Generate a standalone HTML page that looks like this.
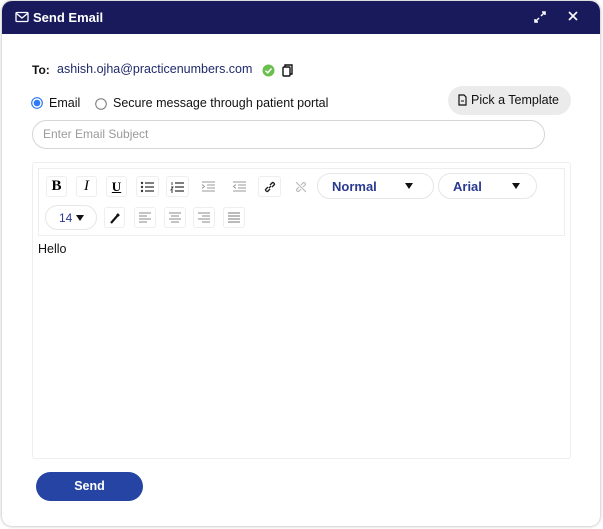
<!DOCTYPE html>
<html><head><style>
*{box-sizing:border-box;margin:0;padding:0}
body{width:603px;height:529px;background:#fff;font-family:"Liberation Sans",sans-serif;position:relative;overflow:hidden}
.dlg{position:absolute;left:2px;top:1px;width:598px;height:525px;background:#fff;border-radius:10px;box-shadow:0 0 3px rgba(0,0,0,.35);overflow:hidden}
.hdr{position:absolute;left:0;top:0;width:598px;height:33px;background:#191a5b;color:#fff;font-size:13px;font-weight:bold}
.a{position:absolute}
.tb{position:absolute;height:21px;border:1px solid #eee;border-radius:3px;background:#fff;display:flex;align-items:center;justify-content:center}
.pill{position:absolute;border:1px solid #e6e6e6;border-radius:14px;color:#2a3b8f;font-size:13px;font-weight:bold}
.tri{position:absolute;width:0;height:0;border-left:4px solid transparent;border-right:4px solid transparent;border-top:6px solid #111}
</style></head><body>
<div class="dlg">
 <div class="hdr">
  <svg class="a" style="left:13px;top:10px" width="14" height="12" viewBox="0 0 14 12"><rect x="1" y="1.5" width="12" height="9" rx="1" fill="none" stroke="#fff" stroke-width="1.3"/><path d="M1.5 2.5 L7 7 L12.5 2.5" fill="none" stroke="#fff" stroke-width="1.3"/></svg>
  <span class="a" style="left:31px;top:9px">Send Email</span>
  <svg class="a" style="left:531px;top:9px" width="14" height="14" viewBox="0 0 14 14"><path d="M8 6 L12 2 M9 2 H12 V5 M6 8 L2 12 M2 9 V12 H5" fill="none" stroke="#fff" stroke-width="1.5"/></svg>
  <svg class="a" style="left:566px;top:10px" width="10" height="10" viewBox="0 0 10 10"><path d="M1 1 L9 9 M9 1 L1 9" stroke="#fff" stroke-width="1.6"/></svg>
 </div>
 <span class="a" style="left:30px;top:62px;font-size:12px;font-weight:bold;color:#111">To:</span>
 <span class="a" style="left:55px;top:61px;font-size:12.5px;color:#1f2a6b">ashish.ojha@practicenumbers.com</span>
 <svg class="a" style="left:260px;top:63px" width="13" height="13" viewBox="0 0 13 13"><circle cx="6.5" cy="6.5" r="6" fill="#6bbf4e"/><path d="M3.5 6.7 L5.7 8.8 L9.5 4.5" fill="none" stroke="#fff" stroke-width="1.5"/></svg>
 <svg class="a" style="left:280px;top:63px" width="11" height="13" viewBox="0 0 11 13"><rect x="1" y="3" width="7" height="9" rx="1" fill="none" stroke="#111" stroke-width="1.4"/><path d="M3 3 V1 H10 V10 H8" fill="none" stroke="#111" stroke-width="1.4"/></svg>
 <svg class="a" style="left:29px;top:96px" width="12" height="12"><circle cx="6" cy="6" r="5.3" fill="#fff" stroke="#2f7bf5" stroke-width="1.2"/><circle cx="6" cy="6" r="3.3" fill="#2f7bf5"/></svg>
 <span class="a" style="left:47px;top:95px;font-size:12.5px;color:#111">Email</span>
 <svg class="a" style="left:93px;top:97px" width="12" height="12"><circle cx="6" cy="6" r="5.3" fill="#fff" stroke="#777" stroke-width="1"/></svg>
 <span class="a" style="left:111px;top:95px;font-size:12.5px;color:#111">Secure message through patient portal</span>
 <div class="a" style="left:446px;top:85px;width:123px;height:29px;border-radius:15px;background:#ebebeb"></div>
 <svg class="a" style="left:456px;top:93px" width="9" height="12" viewBox="0 0 9 12"><path d="M1 1 H6 L8 3 V11 H1 Z" fill="none" stroke="#111" stroke-width="1.2"/><path d="M3 7 H6" stroke="#111"/></svg>
 <span class="a" style="left:469px;top:92px;font-size:12.5px;color:#111">Pick a Template</span>
 <div class="a" style="left:30px;top:119px;width:513px;height:29px;border:1px solid #d6d6d6;border-radius:15px"></div>
 <span class="a" style="left:41px;top:126px;font-size:12px;color:#9a9a9a">Enter Email Subject</span>
 <div class="a" style="left:30px;top:161px;width:539px;height:297px;border:1px solid #eee;border-radius:3px"></div>
 <div class="a" style="left:36px;top:167px;width:527px;height:68px;border:1px solid #eee"></div>
 <div class="tb" style="left:44px;top:175px;width:21px;font-weight:bold;font-family:'Liberation Serif',serif;font-size:15px">B</div>
 <div class="tb" style="left:74px;top:175px;width:21px;font-style:italic;font-family:'Liberation Serif',serif;font-size:15px">I</div>
 <div class="tb" style="left:104px;top:175px;width:21px;text-decoration:underline;font-family:'Liberation Serif',serif;font-size:13px;font-weight:bold">U</div>
 <div class="tb" style="left:134px;top:175px;width:23px"><svg width="15" height="12"><g fill="#333"><circle cx="2" cy="2" r="1.2"/><circle cx="2" cy="6" r="1.2"/><circle cx="2" cy="10" r="1.2"/></g><path d="M5 2H14M5 6H14M5 10H14" stroke="#333" stroke-width="1.3"/></svg></div>
 <div class="tb" style="left:164px;top:175px;width:23px"><svg width="15" height="12"><path d="M2 1V4M1 6H3L1 9H3M1 11H3" stroke="#333" stroke-width=".9" fill="none"/><path d="M5 2H14M5 6H14M5 10H14" stroke="#333" stroke-width="1.3"/></svg></div>
 <div class="tb" style="left:195px;top:175px;width:23px;border-color:transparent"><svg width="15" height="12"><path d="M1 1H14M6 4H14M6 7H14M1 10H14M1 3.5L3.5 5.5 1 7.5" stroke="#999" stroke-width="1" fill="none"/></svg></div>
 <div class="tb" style="left:226px;top:175px;width:23px;border-color:transparent"><svg width="15" height="12"><path d="M1 1H14M6 4H14M6 7H14M1 10H14M4 3.5L1.5 5.5 4 7.5" stroke="#999" stroke-width="1" fill="none"/></svg></div>
 <div class="tb" style="left:256px;top:175px;width:23px"><svg width="14" height="14" viewBox="0 0 14 14"><path d="M6 8 L8 6 M5 7 L2.5 9.5 A2 2 0 0 0 4.5 11.5 L7 9 M7 5 L9.5 2.5 A2 2 0 0 1 11.5 4.5 L9 7" fill="none" stroke="#222" stroke-width="1.4"/></svg></div>
 <div class="tb" style="left:287px;top:175px;width:23px;border-color:transparent"><svg width="14" height="14" viewBox="0 0 14 14"><path d="M5 7 L2.5 9.5 A2 2 0 0 0 4.5 11.5 L7 9 M7 5 L9.5 2.5 A2 2 0 0 1 11.5 4.5 L9 7 M2 2 L12 12" fill="none" stroke="#bbb" stroke-width="1.2"/></svg></div>
 <div class="pill" style="left:315px;top:172px;width:117px;height:26px"><span class="a" style="left:14px;top:5px">Normal</span><div class="tri" style="left:87px;top:9px"></div></div>
 <div class="pill" style="left:436px;top:172px;width:99px;height:26px"><span class="a" style="left:14px;top:5px">Arial</span><div class="tri" style="left:73px;top:9px"></div></div>
 <div class="pill" style="left:43px;top:204px;width:52px;height:25px;font-weight:normal"><span class="a" style="left:13px;top:5px;font-size:12px">14</span><div class="tri" style="left:30px;top:9px"></div></div>
 <div class="tb" style="left:102px;top:206px;width:21px"><svg width="12" height="12"><path d="M2 11 L9 3" stroke="#111" stroke-width="2.2"/><path d="M8 2 L10 4" stroke="#111" stroke-width="2.5"/></svg></div>
 <div class="tb" style="left:132px;top:206px;width:22px"><svg width="14" height="12"><path d="M1 1H13M1 4H9M1 7H13M1 10H9" stroke="#888" stroke-width="1"/></svg></div>
 <div class="tb" style="left:162px;top:206px;width:22px"><svg width="14" height="12"><path d="M1 1H13M3 4H11M1 7H13M3 10H11" stroke="#888" stroke-width="1"/></svg></div>
 <div class="tb" style="left:191px;top:206px;width:22px"><svg width="14" height="12"><path d="M1 1H13M5 4H13M1 7H13M5 10H13" stroke="#888" stroke-width="1"/></svg></div>
 <div class="tb" style="left:221px;top:206px;width:22px"><svg width="14" height="12"><path d="M1 1H13M1 4H13M1 7H13M1 10H13" stroke="#777" stroke-width="1"/></svg></div>
 <span class="a" style="left:36px;top:241px;font-size:12.5px;color:#111">Hello</span>
 <div class="a" style="left:34px;top:471px;width:107px;height:29px;border-radius:15px;background:#2544a3;color:#fff;font-size:12.5px;font-weight:bold;text-align:center;line-height:29px">Send</div>
</div>
</body></html>
